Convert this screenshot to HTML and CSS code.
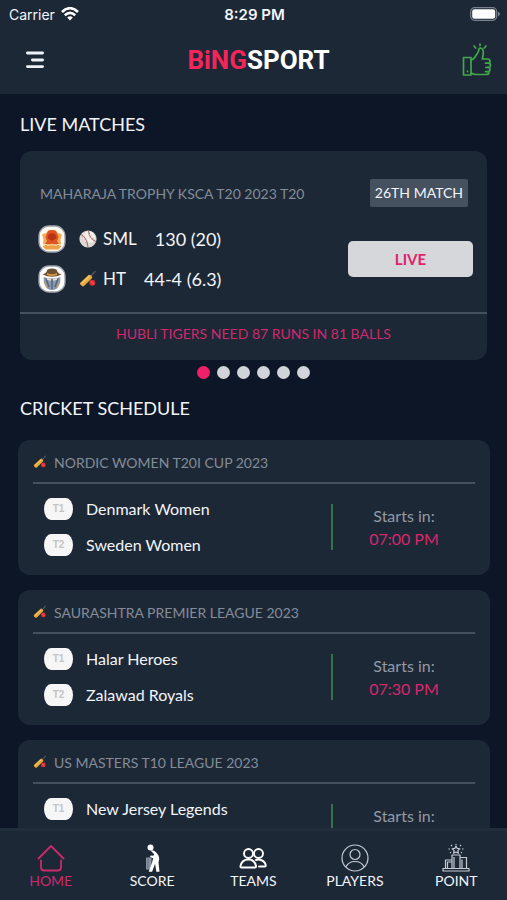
FILE: index.html
```html
<!DOCTYPE html>
<html lang="en">
<head>
  <meta charset="UTF-8" />
  <meta name="viewport" content="width=device-width, initial-scale=1.0" />
  <title>BiNGSPORT</title>
  <link rel="stylesheet" href="styles.css">
</head>
<body>
  <!-- shared icons -->
  <svg class="defs" aria-hidden="true">
    <symbol id="bat" viewBox="0 0 18 18">
      <path d="M11.5 6.5 16 1.5" stroke="#4a5360" stroke-width="1.6" stroke-linecap="round" />
      <path d="M1.500 12.500 9.500 5q1.200-.8 2.200.2l1.200 1.200q.8 1-.2 2L5 16q-1 .8-2 0L1.300 14.500q-.8-1 .2-2z" fill="#e5a93c" />
      <path d="M2.500 13.500 10.500 6.200" stroke="#f6ca68" stroke-width="1.200" />
      <circle cx="13.300" cy="12.700" r="3" fill="#dc3038" />
      <path d="M11.500 11.500 15 14" stroke="#f58a80" stroke-width=".6" />
    </symbol>
  </svg>

  <div class="app">
    <header class="header">
      <div class="status">
        <span class="carrier">Carrier
          <svg width="18" height="14" viewBox="0 0 18 14" fill="none" stroke="#fff" stroke-width="2.600">
            <path d="M1 5Q9-2.600 17 5M3.800 8.300Q9 3.500 14.200 8.300" />
            <path d="M6.200 10.600Q9 8 11.800 10.600L9 13.500z" fill="#fff" stroke="none" />
          </svg>
        </span>
        <span class="clock">8:29 PM</span>
        <svg class="battery" width="30" height="14" viewBox="0 0 30 14">
          <rect x=".7" y=".7" width="26" height="12.600" rx="4" fill="none" stroke="#7b828d" stroke-width="1.200" />
          <rect x="2.200" y="2.200" width="23" height="9.600" rx="2.400" fill="#fff" />
          <path d="M28 4.800q2 .7 2 2.200t-2 2.200z" fill="#7b828d" />
        </svg>
      </div>
      <div class="topbar">
        <button class="icon-btn" aria-label="Menu">
          <svg width="20" height="18" viewBox="0 0 20 18" stroke="#eef2f8" stroke-width="2.800" stroke-linecap="round">
            <path d="M2.400 2h15.200M7.400 9h10.200M2.400 15.600h15.200" />
          </svg>
        </button>
        <h1 class="logo"><span>BiNG</span>SPORT</h1>
        <button class="icon-btn" aria-label="Like">
          <svg width="30" height="34" viewBox="0 0 30 34" fill="none" stroke="#43a64c" stroke-width="1.700" stroke-linecap="round" stroke-linejoin="round">
            <path d="M1.500 14.500h7.500v17.500H1.500zM5.500 28.200v.4" />
            <path d="M9 17q2.500-.3 4-3l3-4.600q.8-1.300.8-2.900 0-1.500 1.500-1.500 3 .3 3 4.600 0 2.700-1 6.400h5.200q2.500 0 2.500 2.100 0 1.900-1.700 2 2.200.2 2.200 2.100 0 2-2.200 2.200 1.700.3 1.700 2.100 0 1.900-2 2.200 1 .4.900 1.300-.3 1.500-2.400 1.500H14.500q-3.500 0-5.500-1.500" />
            <path d="M26 20.100h-2.500M26 24.300h-2.200M25.500 28.700h-2M18 1v1.500M12 3l1.700 2M24 3l-1.700 2" />
          </svg>
        </button>
      </div>
    </header>

    <main class="content">
      <h2 class="title">LIVE MATCHES</h2>

      <section class="live-card">
        <div class="live-head">
          <h3>MAHARAJA TROPHY KSCA T20 2023 T20</h3>
          <span class="match-no">26TH MATCH</span>
        </div>
        <div class="live-body">
          <div class="scores">
            <div class="score">
              <svg class="avatar" width="28" height="28" viewBox="0 0 28 28">
                <rect x="1" y="1" width="26" height="26" rx="10" fill="#fff8ef" stroke="#9da3ae" stroke-width="1.300" />
                <path d="M4 9.500 8 8l3-3h6l3 3 4 1.500-1.500 5 .5 5-6-1-3 1-3-1-6 1 .5-5z" fill="#f4ab58" />
                <path d="M10 6q4-2 8 0l2.500 6-1.500 4 2 3H7l2-3-1.500-4z" fill="#dd5524" />
                <path d="M11 9q3-1.500 6 0l1.500 4-4.500 3-4.500-3z" fill="#b93216" />
                <path d="M4.500 21q9.500-4.500 19 0l-3 3.500h-13z" fill="#eea047" />
                <path d="M9 20.500q5-1.500 10 0" fill="none" stroke="#fbd9a2" stroke-width="1.200" />
              </svg>
              <svg class="mark" width="18" height="18" viewBox="0 0 18 18">
                <circle cx="9" cy="9" r="8.600" fill="#ded9d4" />
                <circle cx="10" cy="7" r="6" fill="#f2eeea" />
                <path d="M2 4.500q6 3 7 12.500M9.500.6q.5 8 7.500 11" fill="none" stroke="#a96556" stroke-width="1" />
                <path d="m3.500 7.500 2-1.500m-.5 4 2.200-1.300m-1 4.300 2.300-1M9 4l2-.8M10.500 7.300l1.800-1.500m.7 4 1.200-2" stroke="#b77869" stroke-width=".6" />
              </svg>
              <span class="team">SML</span>
              <span class="runs">130 (20)</span>
            </div>
            <div class="score">
              <svg class="avatar" width="28" height="28" viewBox="0 0 28 28">
                <rect x="1" y="1" width="26" height="26" rx="10" fill="#fff" stroke="#9da3ae" stroke-width="1.300" />
                <path d="M4.500 9.500q4-1 5-5 4.500-2 9 0 1 4 5 5-9 4.500-19 0z" fill="#705033" />
                <path d="M9 8q5 2.500 10 0v2q-5 2-10 0z" fill="#d49f43" />
                <path d="M5.500 12q8.500 3 17 0l-.5 6-3 5.500q-5 3-10 0L6 18z" fill="#8c99ad" />
                <path d="M8 13.500 11 22M20 13.500 17 22M14 14v10" stroke="#56657e" stroke-width="1.500" />
                <path d="m9 14 4 1m6-1-4 1" stroke="#efe2c6" stroke-width="1.400" />
                <path d="m6 17 3 6m13-6-3 6" stroke="#d1a14c" stroke-width="1" />
              </svg>
              <svg class="mark" width="18" height="18"><use href="#bat" /></svg>
              <span class="team">HT</span>
              <span class="runs">44-4 (6.3)</span>
            </div>
          </div>
          <button class="live-btn">LIVE</button>
        </div>
        <p class="live-note">HUBLI TIGERS NEED 87 RUNS IN 81 BALLS</p>
      </section>

      <div class="dots">
        <i class="active"></i><i></i><i></i><i></i><i></i><i></i>
      </div>

      <h2 class="title">CRICKET SCHEDULE</h2>

      <div class="schedule">
        <section class="match">
          <h3><svg width="14" height="14"><use href="#bat" /></svg>NORDIC WOMEN T20I CUP 2023</h3>
          <div class="match-body">
            <ul>
              <li><span class="badge">T1</span>Denmark Women</li>
              <li><span class="badge">T2</span>Sweden Women</li>
            </ul>
            <p class="starts">Starts in:<time>07:00 PM</time></p>
          </div>
        </section>

        <section class="match">
          <h3><svg width="14" height="14"><use href="#bat" /></svg>SAURASHTRA PREMIER LEAGUE 2023</h3>
          <div class="match-body">
            <ul>
              <li><span class="badge">T1</span>Halar Heroes</li>
              <li><span class="badge">T2</span>Zalawad Royals</li>
            </ul>
            <p class="starts">Starts in:<time>07:30 PM</time></p>
          </div>
        </section>

        <section class="match">
          <h3><svg width="14" height="14"><use href="#bat" /></svg>US MASTERS T10 LEAGUE 2023</h3>
          <div class="match-body">
            <ul>
              <li><span class="badge">T1</span>New Jersey Legends</li>
            </ul>
            <p class="starts">Starts in:</p>
          </div>
        </section>
      </div>
    </main>

    <nav class="tabs">
      <a href="#home" class="active">
        <svg width="28" height="28" viewBox="0 0 28 28" fill="none" stroke="currentColor" stroke-width="1.800" stroke-linecap="round" stroke-linejoin="round">
          <path d="M1.500 14.500 14 2l12.500 12.500M4 16.500v7q0 3 3 3h14q3 0 3-3v-7" />
        </svg>
        HOME
      </a>
      <a href="#score">
        <svg width="28" height="28" viewBox="0 0 28 28">
          <path d="M8 13.500h5.500v12H8z" fill="#8a93a2" />
          <path d="M10 14.500v10" stroke="#5c6675" stroke-width=".8" />
          <circle cx="12.500" cy="3.500" r="3" fill="#fff" />
          <path d="M12.500 6.500q3-1 5.500 1.800 3.500 3.500 3.200 7l-.7 3 1 9.500h-3.200l-1.200-8-3 8h-3.400l3.300-9 1.200-4.500-3.200-1.300.6-1.500 2.600.2 1-1.500z" fill="#fff" />
        </svg>
        SCORE
      </a>
      <a href="#teams">
        <svg width="28" height="28" viewBox="0 0 28 28" fill="none" stroke="#fff" stroke-width="1.900" stroke-linecap="round" stroke-linejoin="round">
          <circle cx="9.500" cy="9.500" r="4.500" />
          <circle cx="19.500" cy="9.500" r="4.500" />
          <path d="M2.500 23.500q-1.200 0-1-1.500Q3 15.500 9.300 15.500T17 22q.2 1.500-1 1.500zM17 16q2.500-1 5 0 4 1.500 4.700 5 .3 1.500-1 1.500H20" />
        </svg>
        TEAMS
      </a>
      <a href="#players">
        <svg width="28" height="28" viewBox="0 0 28 28" fill="none" stroke="#c5cbd5" stroke-width="1.200">
          <circle cx="14" cy="14" r="13" />
          <circle cx="14" cy="10.500" r="5" />
          <path d="M4.800 23Q7.500 17.500 14 17.500T23.200 23" />
        </svg>
        PLAYERS
      </a>
      <a href="#point">
        <svg width="28" height="28" viewBox="0 0 28 28" fill="none" stroke="#c5cbd5" stroke-width="1.200" stroke-linejoin="round">
          <path d="M1 24.500h26V27H1zM3.500 24.500v-8.500H10M10 24.500V11h8v13.500M18 13.500h6.500v11M5.500 24.500V18H10M12 24.500V13M20 15.500v9" />
          <path d="m14 2 1.200 2.400 2.600.4-1.900 1.800.5 2.600L14 8l-2.400 1.200.5-2.600-1.900-1.800 2.600-.4z" />
          <path d="M14 0v1M9 1l1 1M19 1l-1 1M6.500 5h1.500M20 5h1.500M8 9l1-.7M20 9l-1-.7" />
        </svg>
        POINT
      </a>
    </nav>
  </div>
</body>
</html>
```

FILE: styles.css
```css
* {
  box-sizing: border-box;
}

body {
  margin: 0;
  font-family: Lato, sans-serif;
  background: #0d1627;
  color: #f2f5fa;
}

h1, h2, h3, p, ul {
  margin: 0;
  padding: 0;
  font-weight: 400;
}

svg {
  display: block;
  flex: none;
}

.defs {
  position: absolute;
  width: 0;
  height: 0;
}

.app {
  display: flex;
  flex-direction: column;
  height: 100vh;
}

.header {
  flex: none;
  background: #1d2836;
}

.status {
  display: grid;
  grid-template-columns: 1fr auto 1fr;
  align-items: center;
  height: 28px;
  padding: 0 7px 0 9px;
  font-family: Inter, sans-serif;
  font-size: 14px;
}

.carrier {
  display: flex;
  align-items: center;
  gap: 6px;
}

.clock {
  font-size: 15px;
  font-weight: 600;
}

.battery {
  justify-self: end;
}

.topbar {
  display: flex;
  align-items: center;
  height: 66px;
  padding: 0 15px 3px 25px;
}

.icon-btn {
  padding: 0;
  border: none;
  background: none;
  cursor: pointer;
}

.logo {
  flex: 1;
  padding-left: 10px;
  text-align: center;
  font-family: Roboto, sans-serif;
  font-size: 26px;
  font-weight: 700;
  color: #fff;
}

.logo span {
  color: #f3255b;
}

.content {
  flex: 1;
  min-height: 0;
  overflow: hidden;
}

.title {
  padding: 0 20px;
  font-size: 18px;
  line-height: 24px;
}

.content > .title:first-child {
  padding-top: 18px;
}

.live-card {
  margin: 15px 20px 0;
  border-radius: 12px;
  background: #1d2836;
}

.live-head {
  display: flex;
  align-items: center;
  justify-content: space-between;
  padding: 28px 19px 18px 20px;
}

.live-head h3 {
  font-size: 14px;
  color: #848c99;
}

.match-no {
  padding: 0 5px;
  border-radius: 2px;
  background: #465160;
  font-size: 14px;
  line-height: 28px;
}

.live-body {
  display: flex;
  align-items: center;
  justify-content: space-between;
  padding: 0 14px 19px 18px;
}

.scores {
  display: grid;
  gap: 12px;
}

.score {
  display: flex;
  align-items: center;
  font-size: 17px;
  line-height: 28px;
}

.mark {
  margin: 0 6px 0 13px;
}

.runs {
  margin-left: 18px;
  font-size: 18px;
}

.live-btn {
  width: 125px;
  height: 36px;
  border: none;
  border-radius: 5px;
  background: #d6d7da;
  color: #e0246a;
  font-family: inherit;
  font-size: 15px;
  font-weight: 700;
  cursor: pointer;
}

.live-note {
  padding: 9px 0 15px;
  border-top: 2px solid #465160;
  text-align: center;
  font-size: 14px;
  line-height: 22px;
  color: #cf286d;
}

.dots {
  display: flex;
  justify-content: center;
  gap: 7px;
  padding: 6px 0 17px;
}

.dots i {
  width: 13px;
  height: 13px;
  border-radius: 50%;
  background: #d0d3d8;
}

.dots .active {
  background: #ee2068;
}

.schedule {
  display: grid;
  gap: 15px;
  padding: 20px 17px 20px 18px;
}

.match {
  height: 135px;
  padding: 0 15px;
  border-radius: 12px;
  background: #1d2836;
}

.match h3 {
  display: flex;
  align-items: center;
  gap: 7px;
  height: 44px;
  padding-top: 2px;
  border-bottom: 2px solid #465160;
  font-size: 14px;
  color: #848c99;
}

.match-body {
  display: flex;
  align-items: flex-start;
  justify-content: space-between;
  padding: 13px 0 0 11px;
}

.match ul {
  display: grid;
  gap: 12px;
  list-style: none;
}

.match li {
  display: flex;
  align-items: center;
  gap: 13px;
  font-size: 16px;
  line-height: 24px;
}

.badge {
  width: 29px;
  border-radius: 7px / 11px;
  background: #f6f6f6;
  color: #c4c4c4;
  font-family: "Liberation Sans", sans-serif;
  font-size: 10px;
  font-weight: 700;
  line-height: 22px;
  text-align: center;
}

.starts {
  width: 144px;
  min-height: 46px;
  margin-top: 7px;
  border-left: 2px solid #35724a;
  text-align: center;
  font-size: 16px;
  line-height: 23px;
  color: #929aa6;
}

.starts time {
  display: block;
  color: #d4286e;
}

.tabs {
  flex: none;
  display: grid;
  grid-template-columns: repeat(5, 1fr);
  height: 72px;
  border-top: 3px solid #222d3c;
  background: #1d2836;
}

.tabs a {
  display: flex;
  flex-direction: column;
  align-items: center;
  padding-top: 13px;
  font-size: 14px;
  line-height: 18px;
  color: #f2f5fa;
  text-decoration: none;
}

.tabs .active {
  color: #cb2a6c;
}
```
